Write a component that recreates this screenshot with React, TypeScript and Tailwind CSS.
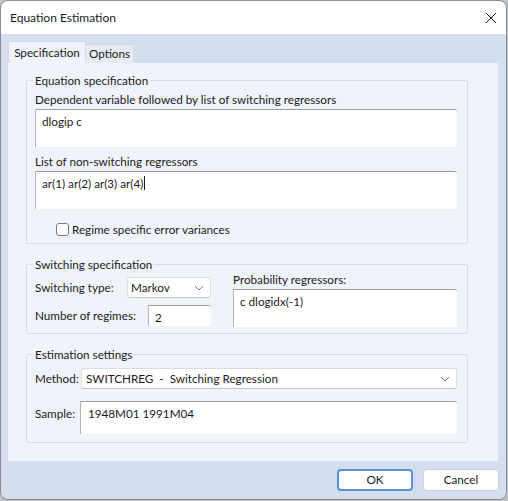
const FONT = "font-['Segoe_UI','Lato',sans-serif]";

function Chevron() {
  return (
    <svg width="10" height="6" viewBox="0 0 10 6" fill="none">
      <path d="M1 1l4 4 4-4" stroke="#7a7a7a" strokeWidth="1" />
    </svg>
  );
}

function TextBox({ className, children }: { className?: string; children?: React.ReactNode }) {
  return (
    <div
      className={
        "bg-white border-t border-l border-t-[#9c9c9c] border-l-[#b4b4b4] rounded-r-[3px] pl-[6px] pt-[3px] leading-[16px] " +
        (className ?? "")
      }
    >
      {children}
    </div>
  );
}

function Select({ value, className }: { value: string; className?: string }) {
  return (
    <div
      className={
        "flex items-center justify-between bg-white border border-[#dcdcdc] border-b-[#c4c4c4] rounded-[3px] pl-[3px] pr-[6px] h-[21px] " +
        (className ?? "")
      }
    >
      <span>{value}</span>
      <Chevron />
    </div>
  );
}

function Group({ title, className, children }: { title: string; className?: string; children: React.ReactNode }) {
  return (
    <fieldset className={"border border-[#d6dbe3] rounded-[2px] pl-[8px] pr-[10px] w-[442px] " + (className ?? "")}>
      <legend className="px-[2px] -ml-[2px] leading-[16px]">{title}</legend>
      {children}
    </fieldset>
  );
}

export default function App() {
  return (
    <div className={"w-[508px] h-[501px] bg-[#bfc3c8] text-[11.7px] text-[#1b1b1b] whitespace-nowrap " + FONT}>
      <div className="w-[507px] h-[500px] flex flex-col border border-[#8c8c8c] rounded-[8px] overflow-hidden">
        {/* title bar */}
        <div className="h-[33px] bg-white flex items-center justify-between pl-[9px] pr-[9px] shrink-0 text-[12px]">
          <span>Equation Estimation</span>
          <svg width="12" height="12" viewBox="0 0 12 12" fill="none">
            <path d="M1 1l10 10M11 1L1 11" stroke="#1b1b1b" strokeWidth="1" />
          </svg>
        </div>

        {/* body */}
        <div className="flex-1 bg-[#d3dfee] flex flex-col">
          {/* tabs */}
          <div className="h-[29px] flex items-end pl-[7px] shrink-0">
            <div className="h-[22px] w-[78px] bg-[#f0f3f9] border border-b-0 border-[#d4d9e1] flex items-center justify-center">
              Specification
            </div>
            <div className="h-[19px] w-[48px] bg-[#e7ecf3] border border-l-0 border-b-0 border-[#d4d9e1] flex items-center justify-center">
              Options
            </div>
          </div>

          {/* panel */}
          <div className="ml-[7px] mr-[8px] h-[398px] bg-[#f0f3f9] pl-[18px] pt-[9px] flex flex-col gap-[12px] shrink-0">
            <Group title="Equation specification" className="pt-[3px] pb-[6px]">
              <div className="leading-[16px]">Dependent variable followed by list of switching regressors</div>
              <TextBox className="mt-[2px] h-[38px]">dlogip c</TextBox>
              <div className="mt-[6px] leading-[16px]">List of non-switching regressors</div>
              <TextBox className="mt-[2px] h-[38px]">
                <span className="inline-flex items-center">
                  ar(1) ar(2) ar(3) ar(4)
                  <span className="inline-block w-px h-[14px] bg-[#1b1b1b] ml-px" />
                </span>
              </TextBox>
              <label className="mt-[12px] h-[16px] ml-[21px] flex items-center gap-[3px]">
                <span className="w-[13px] h-[13px] bg-white border border-[#7a7a7a] rounded-[3px]" />
                <span className="leading-[16px]">Regime specific error variances</span>
              </label>
            </Group>

            <Group title="Switching specification" className="pb-[6px]">
              <div className="flex gap-[22px]">
                <div className="w-[176px] flex flex-col">
                  <div className="mt-[5px] flex items-center justify-between">
                    <span>Switching type:</span>
                    <Select value="Markov" className="w-[84px]" />
                  </div>
                  <div className="mt-[7px] flex items-center justify-between">
                    <span>Number of regimes:</span>
                    <TextBox className="w-[63px] h-[21px] pt-[2px]">2</TextBox>
                  </div>
                </div>
                <div className="flex-1 flex flex-col">
                  <div className="leading-[14px] h-[14px]">Probability regressors:</div>
                  <TextBox className="mt-[3px] h-[38px] pl-[5px]">c dlogidx(-1)</TextBox>
                </div>
              </div>
            </Group>

            <Group title="Estimation settings" className="pb-[8px]">
              <div className="mt-[6px] flex items-center">
                <span className="w-[46px] shrink-0">Method:</span>
                <Select value="SWITCHREG  -  Switching Regression" className="flex-1 whitespace-pre pl-[4px] pr-[5px]" />
              </div>
              <div className="mt-[12px] flex items-start">
                <span className="w-[45px] shrink-0 mt-[4px] leading-[16px]">Sample:</span>
                <TextBox className="flex-1 h-[33px] pl-[7px]">1948M01 1991M04</TextBox>
              </div>
            </Group>
          </div>

          {/* buttons */}
          <div className="flex justify-end gap-[10px] pt-[8px] pr-[7px]">
            <button className="w-[76px] h-[22px] bg-white border-2 border-[#5a8fd0] rounded-[4px] flex items-center justify-center">
              OK
            </button>
            <button className="w-[76px] h-[22px] bg-white border border-[#d0d0d0] rounded-[4px] flex items-center justify-center">
              Cancel
            </button>
          </div>
        </div>
      </div>
    </div>
  );
}
